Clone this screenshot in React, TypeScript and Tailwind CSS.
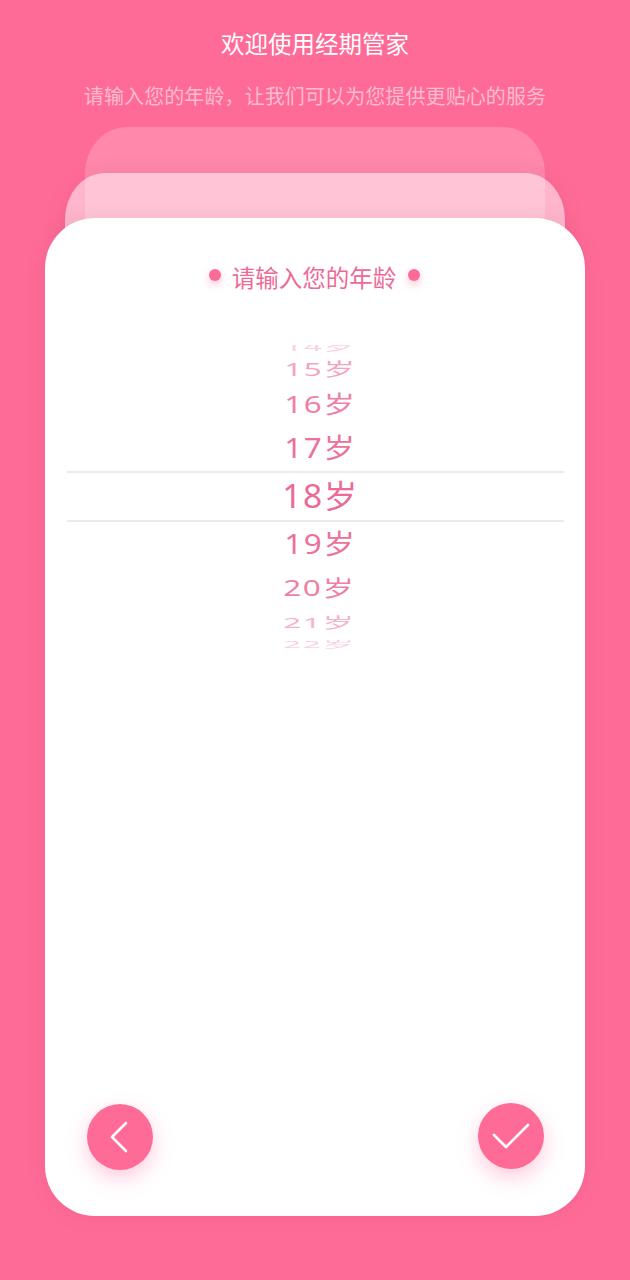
import React from 'react';

const FONT = "font-['Noto_Sans','Noto_Sans_CJK_SC',sans-serif]";

// Wheel rows squashed towards the edges, like a 3D drum picker
const WHEEL_ROWS = [
  { age: 14, box: 'h-[13px] items-start', text: 'scale-y-[0.4] opacity-30 -translate-y-[18px]' },
  { age: 15, box: 'h-[28px] items-center', text: 'scale-y-[0.6] opacity-60 -translate-y-[3px]' },
  { age: 16, box: 'h-[40px] items-center', text: 'scale-y-[0.8] opacity-85 -translate-y-[2px]' },
  { age: 17, box: 'h-[45px] items-center', text: 'scale-y-[0.92] opacity-95 -translate-y-[1px]' },
  { age: 18, box: 'h-[50px] items-center', text: 'text-[32px] opacity-100 translate-x-px' },
  { age: 19, box: 'h-[45px] items-center', text: 'scale-y-[0.92] opacity-95' },
  { age: 20, box: 'h-[40px] items-center', text: 'scale-y-[0.72] opacity-85 translate-y-[2px] -translate-x-px' },
  { age: 21, box: 'h-[28px] items-center', text: 'scale-y-[0.5] opacity-50 translate-y-[2px] -translate-x-px' },
  { age: 22, box: 'h-[17px] items-end', text: 'scale-y-[0.3] opacity-30 translate-y-[14px] -translate-x-px' },
];

function AgeWheel() {
  return (
    <div className="relative mt-[50px] w-[497px] mx-auto flex flex-col overflow-hidden">
      {WHEEL_ROWS.map((row) => (
        <div key={row.age} className={`flex justify-center translate-x-[5px] ${row.box}`}>
          <span className={`text-[30px] leading-[40px] tracking-[1.5px] scale-x-[1.05] text-[#ec6a97] whitespace-nowrap ${row.text}`}>
            {row.age}岁
          </span>
        </div>
      ))}
      {/* Selection lines */}
      <div className="absolute left-0 right-0 top-[126px] h-[51px] border-y-2 border-[#ebebeb]" />
    </div>
  );
}

function RoundButton({ children, className }: { children: React.ReactNode; className?: string }) {
  return (
    <button className={`w-[66px] h-[66px] rounded-full bg-[#ff6b97] flex items-center justify-center shadow-[0_8px_20px_rgba(255,107,151,0.35)] ${className ?? ''}`}>
      {children}
    </button>
  );
}

export default function App() {
  return (
    <div className={`w-[630px] h-[1280px] bg-[#ff6b97] flex flex-col items-center overflow-hidden ${FONT}`}>
      <h1 className="mt-[28px] h-[32px] leading-[32px] text-[23.5px] text-white font-normal">欢迎使用经期管家</h1>
      <p className="mt-[22px] h-[28px] leading-[28px] text-[20px] tracking-[0.1px] translate-y-px text-[#fdbcd0]">请输入您的年龄，让我们可以为您提供更贴心的服务</p>

      {/* Stacked cards behind the main one */}
      <div className="mt-[17px] w-[460px] h-[120px] shrink-0 rounded-t-[42px_46px] bg-white/20" />
      <div className="-mt-[74px] w-[500px] h-[90px] shrink-0 rounded-t-[40px_46px] bg-white/50 shadow-[0_0_24px_rgba(0,0,0,0.06)]" />

      <div className="-mt-[45px] w-[540px] h-[998px] shrink-0 rounded-[50px] bg-white shadow-[0_0_24px_rgba(0,0,0,0.06)] flex flex-col">
        <div className="mt-[43px] h-[34px] flex items-center justify-center gap-[12px]">
          <span className="w-[12px] h-[12px] rounded-full bg-[#ff6b97] -mt-[6px] shadow-[0_4px_8px_rgba(255,107,151,0.4)]" />
          <span className="text-[23.5px] leading-[34px] text-[#ec6a97] -translate-x-px">请输入您的年龄</span>
          <span className="w-[12px] h-[12px] rounded-full bg-[#ff6b97] -mt-[6px] -translate-x-px shadow-[0_4px_8px_rgba(255,107,151,0.4)]" />
        </div>

        <AgeWheel />

        <div className="mt-auto mb-[46px] pl-[42px] pr-[41px] flex justify-between items-end">
          <RoundButton>
            <svg width="24" height="32" viewBox="0 0 24 32" fill="none" stroke="#fff" strokeWidth="2.6" strokeLinecap="round" strokeLinejoin="round">
              <path d="M18 2 L4 16 L18 30" />
            </svg>
          </RoundButton>
          <RoundButton className="mb-px">
            <svg width="40" height="28" viewBox="0 0 40 28" fill="none" stroke="#fff" strokeWidth="2.6" strokeLinecap="round" strokeLinejoin="round">
              <path d="M3 13 L15 25 L37 3" />
            </svg>
          </RoundButton>
        </div>
      </div>
    </div>
  );
}
